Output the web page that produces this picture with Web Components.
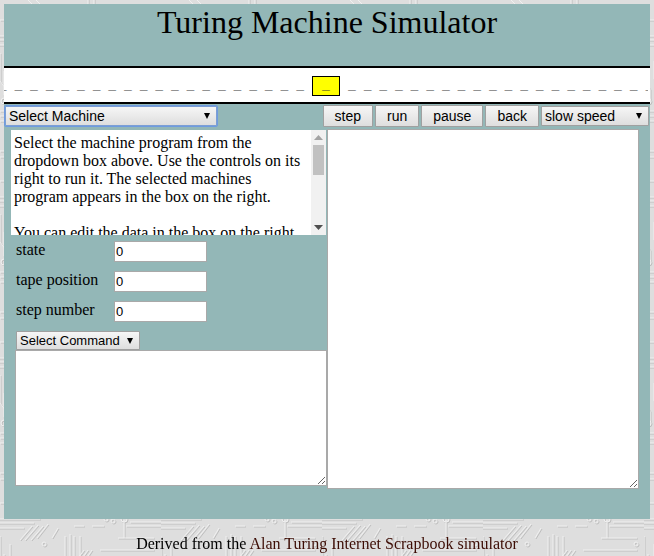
<!DOCTYPE html>
<html lang="en">
<head>
<meta charset="utf-8">
<title>Turing Machine Simulator</title>
<style>
html { background: #dedede; }
body {
  margin: 4px;
  font: 16px/18px "Liberation Serif", "Times New Roman", serif;
  color: #000;
}
</style>
</head>
<body>
<circuit-page>
  <turing-panel heading="Turing Machine Simulator">
    <tape-strip slot="tape" symbol="_"></tape-strip>
    <drop-down slot="machine" class="focused" label="Machine" options="Select Machine"></drop-down>
    <push-button slot="controls">step</push-button>
    <push-button slot="controls">run</push-button>
    <push-button slot="controls">pause</push-button>
    <push-button slot="controls">back</push-button>
    <drop-down slot="controls" class="speed" label="Speed" options="slow speed|fast speed"></drop-down>
    <scroll-note slot="left">
      <div>Select the machine program from the dropdown box above. Use the controls on its right to run it. The selected machines program appears in the box on the right.</div>
      <br>
      <div>You can edit the data in the box on the right</div>
    </scroll-note>
    <text-field slot="left" label="state" value="0"></text-field>
    <text-field slot="left" label="tape position" value="0"></text-field>
    <text-field slot="left" label="step number" value="0"></text-field>
    <drop-down slot="left" class="command" label="Command" options="Select Command"></drop-down>
    <text-box slot="left" class="commands" label="Command input"></text-box>
    <text-box slot="right" class="program" label="Program"></text-box>
  </turing-panel>
  <page-credit slot="footer">Derived from the</page-credit>
</circuit-page>

<script>
const define = (name, html, setup) => customElements.define(name, class extends HTMLElement {
  connectedCallback() {
    if (this.shadowRoot) return;
    const root = this.attachShadow({ mode: "open" });
    const template = document.createElement("template");
    template.innerHTML = html;
    root.append(template.content.cloneNode(true));
    if (setup) setup(this, root);
  }
});

define("circuit-page", `
<style>
  :host { display: block; }
  svg { position: fixed; inset: 0; width: 100%; height: 100%; z-index: -1; }
  footer { padding-top: 16px; text-align: center; }
</style>
<svg aria-hidden="true">
  <defs>
    <g id="trace" fill="none" stroke-width="1">
      <path d="M-5 5H40M-5 9H34M-5 14H24M130 8H165M126 12H165M0 22V50L6 58V68M4 40V64M10 30V48L18 56M65 22V50M70 20V54M74 22V44L58 60M80 22V42L54 70M84 36L56 74M88 36L62 72M92 36L66 74M100 36H154M106 50H148M20 26L32 12M25 26L38 11M31 26L43 12M37 24L48 10M52 24L58 14M74 12H84M92 12H104M124 6V24M118 24H154M0 80H38L52 94H88M0 85H35L49 99H94M0 90H32L46 104H100M110 76V108L130 128H160M116 76V104L136 124H160M122 80V100L142 120H160M0 120H26L42 136H76M0 126H24L40 142H80M88 110V136L106 154M94 110V134L112 152M0 150H60M64 148L80 160M126 140H160M124 146H160"/>
      <circle cx="56" cy="52" r="3"/><circle cx="44" cy="30" r="2"/><circle cx="101" cy="52" r="3"/><circle cx="153" cy="30" r="2"/><circle cx="124" cy="5" r="3"/><circle cx="106" cy="5" r="2"/><circle cx="113" cy="7" r="2"/><circle cx="94" cy="92" r="3"/><circle cx="100" cy="105" r="3"/><circle cx="80" cy="138" r="3"/><circle cx="4" cy="70" r="3"/>
    </g>
    <pattern id="board" width="161" height="161" y="514" patternUnits="userSpaceOnUse">
      <rect width="161" height="161" fill="#dedede"/>
      <use href="#trace" stroke="#bebebe" transform="translate(1 1)"/>
      <use href="#trace" stroke="#f0f0f0"/>
    </pattern>
  </defs>
  <rect width="100%" height="100%" fill="url(#board)"/>
</svg>
<main><slot></slot></main>
<footer><slot name="footer"></slot></footer>`);

define("turing-panel", `
<style>
  :host { display: block; background: #93b7b7; padding-bottom: 30px; }
  h1 { margin: 0; padding-bottom: 26px; font-size: 32px; line-height: 36px; font-weight: normal; text-align: center; }
  .bar { display: flex; justify-content: space-between; align-items: center; padding: 1px 1px 2px; }
  .controls { display: flex; align-items: center; gap: 2px; }
  .work { display: grid; grid-template-columns: 1fr 1fr; padding: 0 11px; }
  .left { display: flex; flex-direction: column; padding-top: 1px; }
</style>
<h1></h1>
<slot name="tape"></slot>
<div class="bar"><slot name="machine"></slot><div class="controls"><slot name="controls"></slot></div></div>
<div class="work"><div class="left"><slot name="left"></slot></div><div><slot name="right"></slot></div></div>`,
(host, root) => { root.querySelector("h1").textContent = host.getAttribute("heading"); });

define("tape-strip", `
<style>
  :host {
    display: flex; align-items: center; height: 32px; padding-top: 2px; background: #fff;
    border: solid #000; border-width: 2px 0; overflow: hidden;
    font: 13px/18px "DejaVu Sans Mono", monospace; color: #333;
  }
  .side { flex: 1 1 0; min-width: 0; overflow: hidden; display: flex; white-space: pre; padding-bottom: 4px; }
  .before { justify-content: flex-end; padding-right: 8px; }
  .after { padding-left: 8px; margin-right: 2px; }
  .head { box-sizing: border-box; width: 28px; height: 20px; border: 1px solid #000; background: #ff0; text-align: center; line-height: 14px; }
</style>
<div class="side before"><span></span></div><div class="head"></div><div class="side after"><span></span></div>`,
(host, root) => {
  const symbol = host.getAttribute("symbol");
  const cells = Array(20).fill(symbol).join(" ");
  root.querySelector(".before span").textContent = cells;
  root.querySelector(".after span").textContent = cells;
  root.querySelector(".head").textContent = symbol;
});

define("push-button", `
<style>
  :host { display: block; }
  button {
    display: block; box-sizing: border-box; height: 22px; margin: 0; padding: 0 11px;
    border: 1px solid #a0a0a0; border-radius: 1px;
    background: linear-gradient(#f6f6f6, #dedede);
    font: 14px/18px "Liberation Sans", Arial, sans-serif; color: #000;
  }
</style>
<button type="button"><slot></slot></button>`);

define("drop-down", `
<style>
  :host { display: block; position: relative; font: 14px/18px "Liberation Sans", Arial, sans-serif; }
  select {
    appearance: none; display: block; box-sizing: border-box; width: 100%; height: 20px; margin: 0;
    padding: 0 16px 0 3px; border: 1px solid #a0a0a0; border-radius: 1px;
    background: linear-gradient(#f6f6f6, #dedede); font: inherit; color: #000;
  }
  svg { position: absolute; right: 7px; top: 50%; width: 6px; height: 6px; margin-top: -3px; pointer-events: none; }
  :host(.focused) { width: 212px; }
  :host(.focused) select { outline: 1px solid #6f9be0; border-color: #7c9fd4; }
  :host(.speed) { width: 108px; }
  :host(.command) { width: 124px; margin-left: 1px; font-size: 13px; }
  :host(.command) select { height: 19px; }
</style>
<select></select>
<svg viewBox="0 0 6 6" aria-hidden="true"><path d="M0 0h6L3 6z"/></svg>`,
(host, root) => {
  const select = root.querySelector("select");
  select.setAttribute("aria-label", host.getAttribute("label"));
  host.getAttribute("options").split("|").forEach(text => select.add(new Option(text)));
});

define("scroll-note", `
<style>
  :host { display: flex; height: 105px; margin: 0 1px 6px -4px; background: #fff; }
  .text { flex: 1; box-sizing: border-box; padding: 4px 4px 0 3px; overflow: auto; scrollbar-width: none; }
  .rail { width: 15px; background: #f1f1f1; }
  .rail svg { display: block; width: 15px; height: 105px; }
</style>
<div class="text" tabindex="0"><slot></slot></div>
<div class="rail"><svg viewBox="0 0 15 105" aria-hidden="true">
  <path d="M3 10h9L7.500 5z" fill="#a3a3a3"/><path d="M2 15h11v30H2z" fill="#c1c1c1"/><path d="M3 95h9L7.500 100z" fill="#505050"/>
</svg></div>`);

define("text-field", `
<style>
  :host { display: flex; height: 30px; padding-left: 1px; }
  label { width: 98px; }
  input {
    box-sizing: border-box; width: 93px; height: 21px; margin: 0; padding: 0 1px;
    border: 1px solid #a9a9a9; background: #fff; color: #000;
    font: 13px/18px "Liberation Sans", Arial, sans-serif;
  }
</style>
<label for="value"></label><input id="value" type="text">`,
(host, root) => {
  root.querySelector("label").textContent = host.getAttribute("label");
  root.querySelector("input").value = host.getAttribute("value");
});

define("text-box", `
<style>
  :host { display: block; }
  textarea {
    display: block; box-sizing: border-box; width: 100%; height: 136px; margin: 0; padding: 2px;
    border: 1px solid #a9a9a9; background: #fff; resize: both; font: 13px/18px "Liberation Mono", monospace;
  }
  :host(.program) textarea { height: 360px; }
</style>
<textarea></textarea>`,
(host, root) => { root.querySelector("textarea").setAttribute("aria-label", host.getAttribute("label")); });

define("page-credit", `
<style>
  :host { display: block; }
  a { color: #3c0c04; text-decoration: none; }
</style>
<slot></slot> <a href="#turing-scrapbook">Alan Turing Internet Scrapbook simulator</a>`);
</script>
</body>
</html>
